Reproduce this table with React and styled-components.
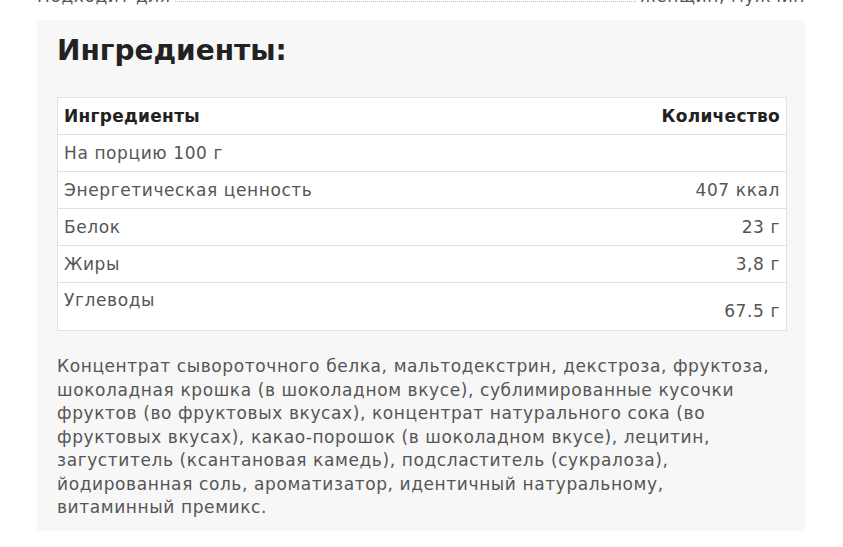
import React from 'react';
import styled, { createGlobalStyle } from 'styled-components';

const Global = createGlobalStyle`
  body {
    margin: 0;
    background: #ffffff;
    font-family: "DejaVu Sans", "Noto Sans", sans-serif;
    overflow: hidden;
  }
`;

const Page = styled.div`
  width: 843px;
  height: 547px;
  overflow: hidden;
`;

const SpecRow = styled.div`
  display: flex;
  align-items: baseline;
  margin: -14px 38px 0 37px;
  height: 20px;
  font-size: 17px;
  letter-spacing: 0.6px;
  color: #555;
`;

const Leader = styled.span`
  flex: 1;
  border-bottom: 1px dotted #bbb;
  margin: 0 4px;
`;

const Panel = styled.section`
  margin: 14px 38px 0 37px;
  background: #f7f7f7;
  padding: 14px 18px 11px 20px;
`;

const Title = styled.h2`
  margin: 0 0 29px;
  font-size: 28px;
  line-height: 34px;
  font-weight: 700;
  color: #222;
`;

const Table = styled.table`
  width: 100%;
  border-collapse: collapse;
  background: #fff;
  border: 1px solid #e2e2e2;
`;

const Th = styled.th`
  text-align: ${p => (p.$right ? 'right' : 'left')};
  font-size: 17px;
  letter-spacing: 0.3px;
  font-weight: 700;
  color: #222;
  height: 37px;
  padding: 0 6px;
  border-bottom: 1px solid #e2e2e2;
  box-sizing: border-box;
`;

const Td = styled.td`
  text-align: ${p => (p.$right ? 'right' : 'left')};
  vertical-align: ${p => p.$align || 'middle'};
  font-size: 17px;
  letter-spacing: 0.6px;
  color: #555;
  height: ${p => p.$tall ? '48px' : '37px'};
  padding: ${p => p.$tall && p.$align === 'top' ? '7px 6px 0' : p.$tall ? '8px 6px 0' : '0 6px'};
  border-bottom: 1px solid #e2e2e2;
  box-sizing: border-box;
`;

const Composition = styled.p`
  margin: 24px 0 0;
  font-size: 17px;
  letter-spacing: 0.6px;
  line-height: 23.5px;
  color: #555;
`;

const rows = [
  ['На порцию 100 г', ''],
  ['Энергетическая ценность', '407 ккал'],
  ['Белок', '23 г'],
  ['Жиры', '3,8 г'],
];

const lines = [
  'Концентрат сывороточного белка, мальтодекстрин, декстроза, фруктоза,',
  'шоколадная крошка (в шоколадном вкусе), сублимированные кусочки',
  'фруктов (во фруктовых вкусах), концентрат натурального сока (во',
  'фруктовых вкусах), какао-порошок (в шоколадном вкусе), лецитин,',
  'загуститель (ксантановая камедь), подсластитель (сукралоза),',
  'йодированная соль, ароматизатор, идентичный натуральному,',
  'витаминный премикс.',
];

export default function App() {
  return (
    <Page>
      <Global />
      <SpecRow>
        <span>Подходит для</span>
        <Leader />
        <span>женщин, мужчин</span>
      </SpecRow>
      <Panel>
        <Title>Ингредиенты:</Title>
        <Table>
          <thead>
            <tr>
              <Th>Ингредиенты</Th>
              <Th $right>Количество</Th>
            </tr>
          </thead>
          <tbody>
            {rows.map(([name, value]) => (
              <tr key={name}>
                <Td>{name}</Td>
                <Td $right>{value}</Td>
              </tr>
            ))}
            <tr>
              <Td $tall $align="top">Углеводы</Td>
              <Td $tall $right>67.5 г</Td>
            </tr>
          </tbody>
        </Table>
        <Composition>
          {lines.map((line, i) => (
            <React.Fragment key={i}>
              {line}
              {i < lines.length - 1 && <br />}
            </React.Fragment>
          ))}
        </Composition>
      </Panel>
    </Page>
  );
}
